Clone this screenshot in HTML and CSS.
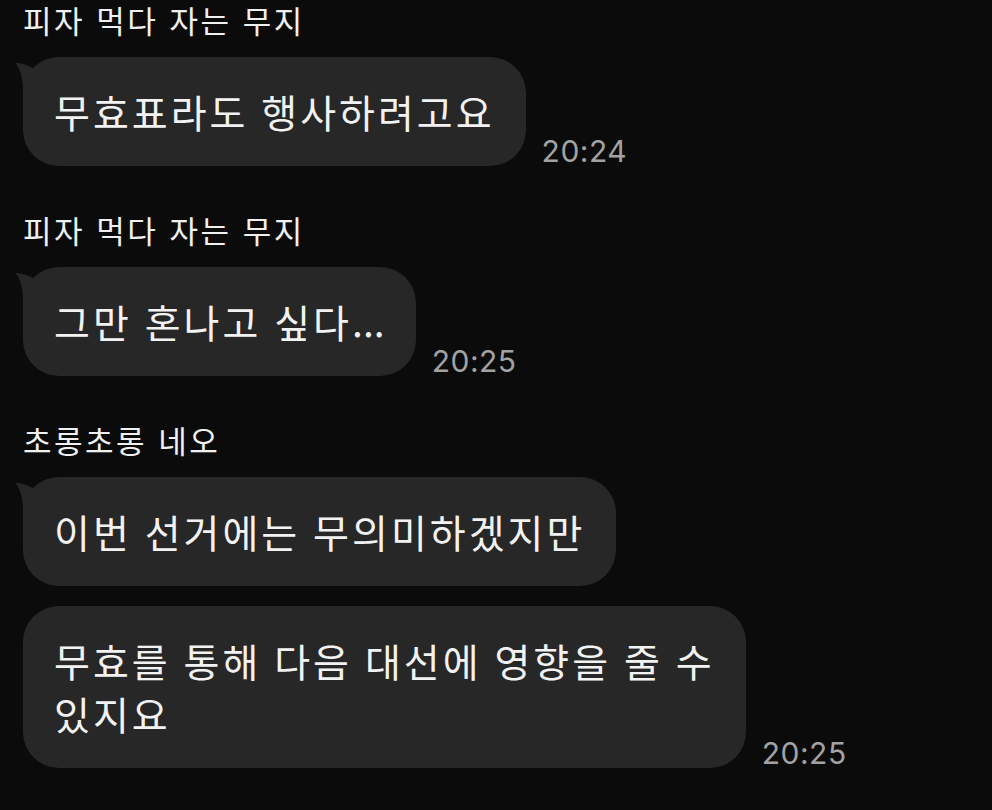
FILE: index.html
```html
<!DOCTYPE html>
<html lang="ko">
<head>
    <meta charset="UTF-8">
    <meta name="viewport" content="width=device-width, initial-scale=1.0">
    <title>채팅</title>
    <link rel="stylesheet" href="styles.css">
</head>
<body>
    <div class="chat">
        <div class="group">
            <div class="name">피자 먹다 자는 무지</div>
            <div class="row">
                <div class="bubble first">
                    <svg class="tail" viewBox="0 0 30 40" width="30" height="40"><path d="M2,6 C6,9 10,19 10,33 L10,40 L24,40 L24,14 C16,8 9,6 2,6 Z"/></svg>
                    무효표라도 행사하려고요
                </div>
                <span class="time">20:24</span>
            </div>
        </div>

        <div class="group">
            <div class="name">피자 먹다 자는 무지</div>
            <div class="row">
                <div class="bubble first">
                    <svg class="tail" viewBox="0 0 30 40" width="30" height="40"><path d="M2,6 C6,9 10,19 10,33 L10,40 L24,40 L24,14 C16,8 9,6 2,6 Z"/></svg>
                    그만 혼나고 싶다<span class="dots">...</span>
                </div>
                <span class="time">20:25</span>
            </div>
        </div>

        <div class="group">
            <div class="name">초롱초롱 네오</div>
            <div class="row">
                <div class="bubble first">
                    <svg class="tail" viewBox="0 0 30 40" width="30" height="40"><path d="M2,6 C6,9 10,19 10,33 L10,40 L24,40 L24,14 C16,8 9,6 2,6 Z"/></svg>
                    이번 선거에는 무의미하겠지만
                </div>
            </div>
            <div class="row">
                <div class="bubble">무효를 통해 다음 대선에 영향을 줄 수<br>있지요</div>
                <span class="time">20:25</span>
            </div>
        </div>
    </div>
</body>
</html>
```

FILE: styles.css
```css
body {
    margin: 0;
    background: #0b0b0b;
    font-family: "Noto Sans CJK KR", "Noto Sans", sans-serif;
    color: #f2f2f2;
}
.chat {
    padding: 0 0 0 23px;
}
.group {
    margin-bottom: 44px;
}
.name {
    font-size: 31px;
    line-height: 40px;
    letter-spacing: 2.5px;
    margin-bottom: 17px;
    color: #f0f0f0;
}
.row {
    display: flex;
    align-items: flex-end;
    margin-bottom: 20px;
}
.row:last-child {
    margin-bottom: 0;
}
.bubble {
    position: relative;
    max-width: 780px;
    box-sizing: border-box;
    background: #272727;
    border-radius: 36px;
    padding: 28px 31px 28px 31px;
    font-size: 39px;
    line-height: 53px;
    letter-spacing: 3px;
    word-spacing: -1px;
    word-break: keep-all;
}
.dots {
    letter-spacing: 0;
}
.tail {
    position: absolute;
    left: -10px;
    top: 0;
    fill: #272727;
}
.time {
    flex: none;
    margin-left: 16px;
    font-family: Inter, "Liberation Sans", sans-serif;
    font-size: 30px;
    line-height: 29px;
    letter-spacing: 0.5px;
    color: #a2a2a2;
}
```
